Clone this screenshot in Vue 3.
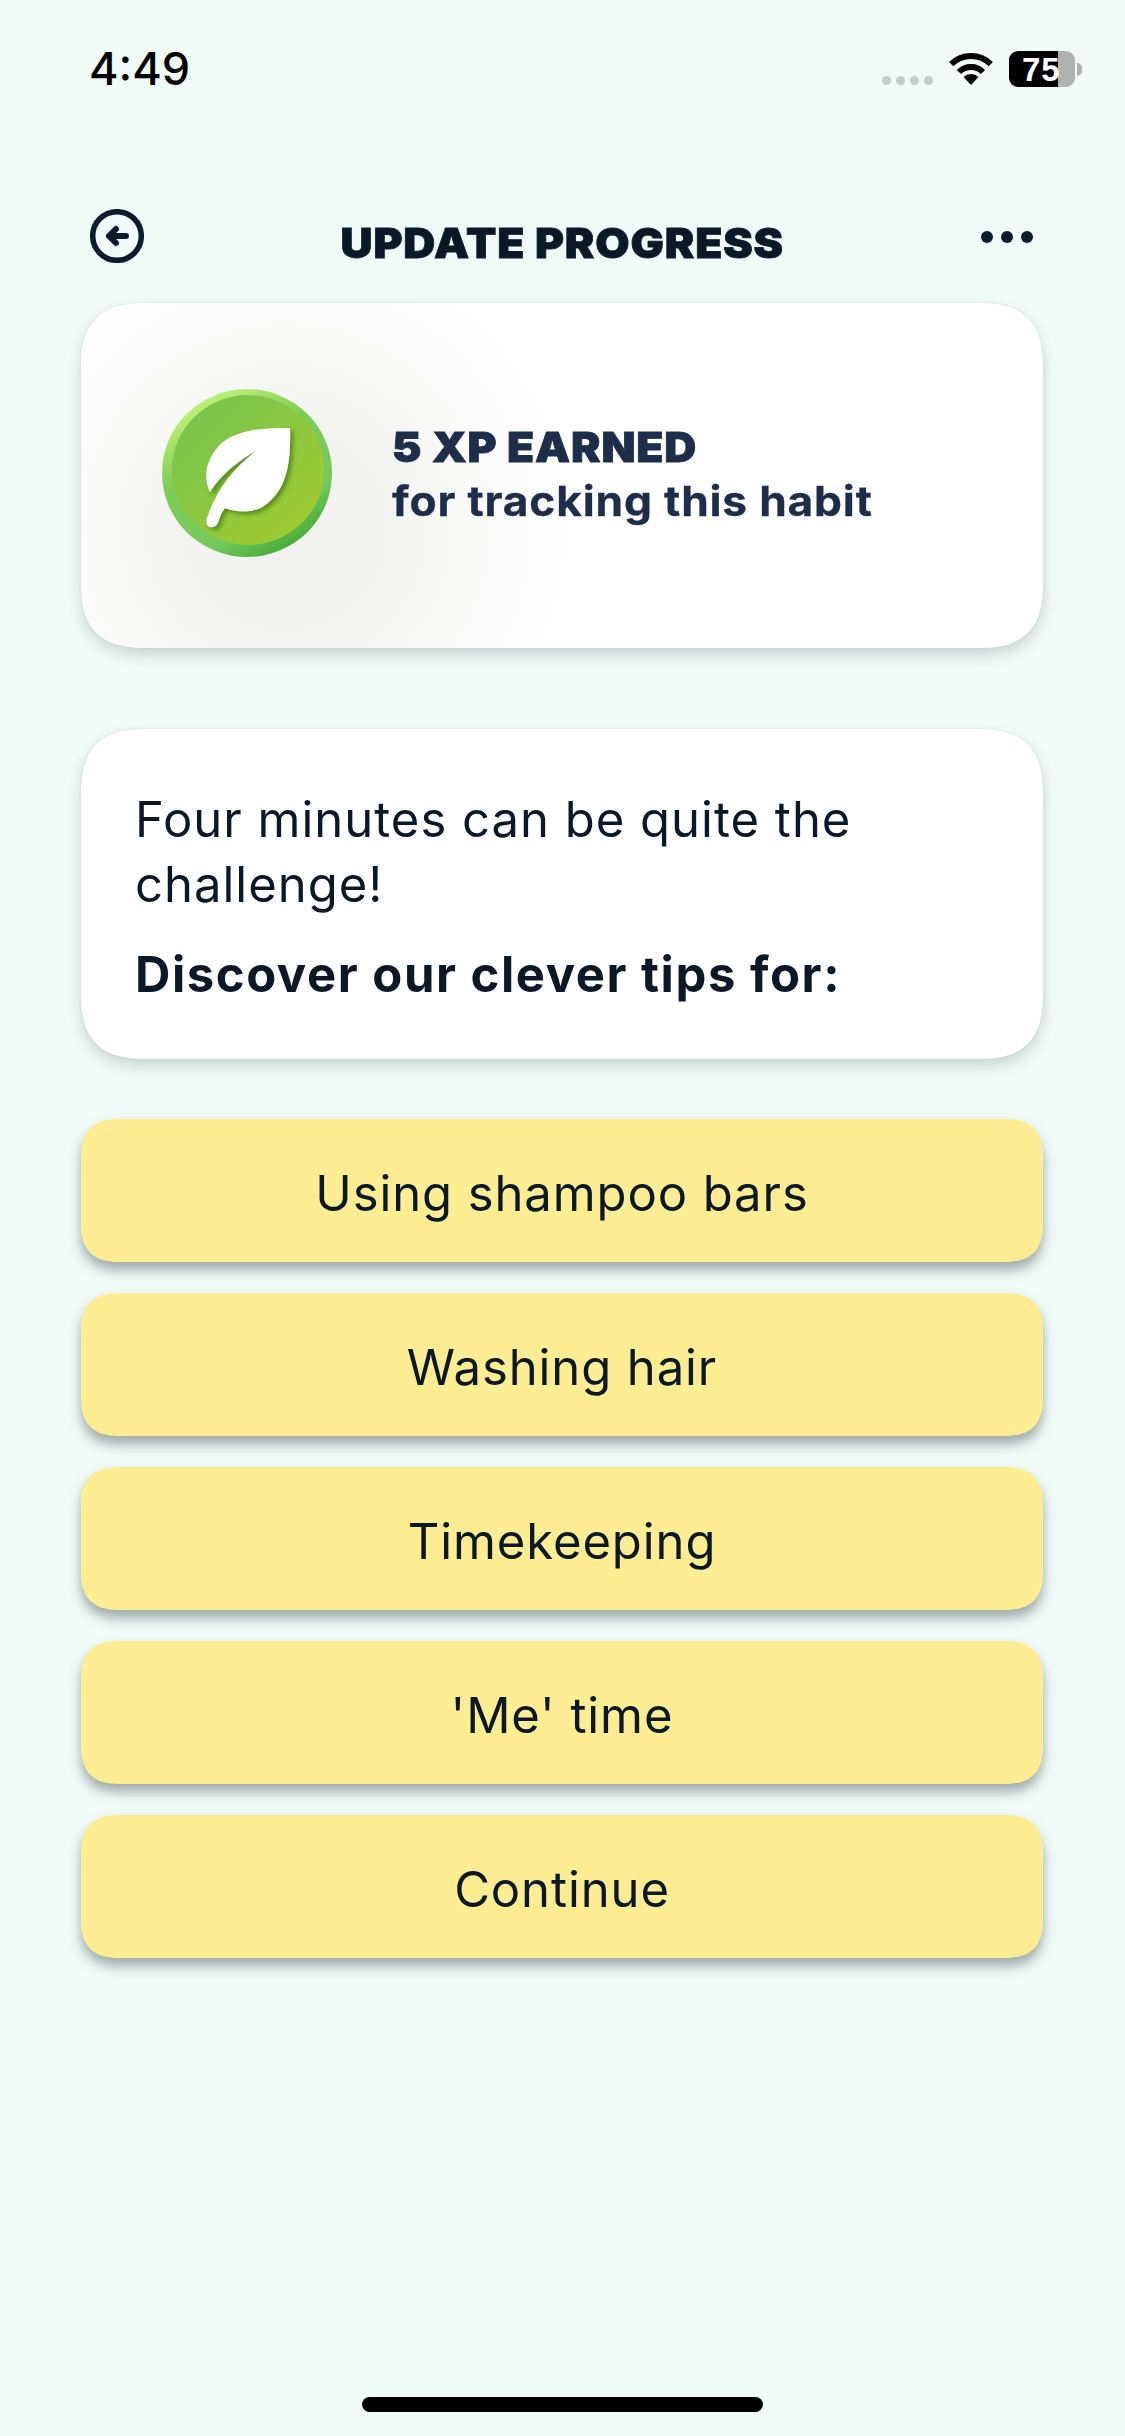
<script setup>
const options = ['Using shampoo bars', 'Washing hair', 'Timekeeping', "'Me' time", 'Continue']
</script>

<template>
  <div class="screen">
    <div class="status">
      <span class="time">4:49</span>
      <div class="status-right">
        <div class="signal"><i></i><i></i><i></i><i></i></div>
        <svg class="wifi" width="46" height="33" viewBox="0 0 46 33">
          <path d="M3.2 12.2A28 28 0 0 1 42.8 12.2M11 20A17 17 0 0 1 35 20" fill="none" stroke="#000" stroke-width="6" />
          <path d="M23 33L15.5 25A11 11 0 0 1 30.5 25Z" fill="#000" />
        </svg>
        <div class="battery"><span>75</span></div>
        <div class="nub"></div>
      </div>
    </div>

    <header class="head">
      <svg class="back" width="54" height="54" viewBox="0 0 54 54">
        <circle cx="27" cy="27" r="24.3" fill="none" stroke="#0d1b2e" stroke-width="5.5" />
        <path d="M36 27H19M26 20L19 27L26 34" fill="none" stroke="#0d1b2e" stroke-width="6" stroke-linecap="round" stroke-linejoin="round" />
      </svg>
      <h1 class="title">UPDATE PROGRESS</h1>
      <div class="more"><i></i><i></i><i></i></div>
    </header>

    <section class="card xp">
      <svg class="coin" width="170" height="170" viewBox="0 0 170 170">
        <defs>
          <linearGradient id="rim" x1="0.2" y1="0.05" x2="0.75" y2="1">
            <stop offset="0" stop-color="#c4f57c" />
            <stop offset="0.35" stop-color="#80cc55" />
            <stop offset="0.75" stop-color="#74c85e" />
            <stop offset="1" stop-color="#3fa52f" />
          </linearGradient>
          <linearGradient id="face" x1="0.1" y1="0.1" x2="0.85" y2="0.9">
            <stop offset="0" stop-color="#79c44f" />
            <stop offset="1" stop-color="#a0ca30" />
          </linearGradient>
          <filter id="leafShadow" x="-20%" y="-20%" width="140%" height="140%">
            <feDropShadow dx="3" dy="3" stdDeviation="2" flood-color="#3f7d12" flood-opacity="0.75" />
          </filter>
        </defs>
        <ellipse cx="85" cy="85" rx="85" ry="84" fill="url(#rim)" />
        <ellipse cx="86" cy="82" rx="76" ry="75" fill="url(#face)" />
        <path
          filter="url(#leafShadow)"
          fill="#fff"
          d="M128 40C95 39 68 44 55 60C44 73 41 90 48 104C60 85 78 72 94 63C72 80 55 100 45 130C43 137 47 140 51 139C55 138 56 135 57 132C58 128 60 124 63 120C76 125 93 126 106 115C125 99 129 75 128 40Z"
        />
      </svg>
      <div class="xp-text">
        <strong>5 XP EARNED</strong>
        <span>for tracking this habit</span>
      </div>
    </section>

    <section class="card message">
      <p>Four minutes can be quite the challenge!</p>
      <p class="bold">Discover our clever tips for:</p>
    </section>

    <div class="options">
      <button v-for="o in options" :key="o" class="option">{{ o }}</button>
    </div>

    <div class="home"></div>
  </div>
</template>

<style>
html, body { margin: 0; background: #f0faf7; }
</style>

<style scoped>
.screen {
  width: 1125px;
  height: 2436px;
  box-sizing: border-box;
  padding: 0 82px 0 81px;
  background: #f0faf7;
  color: #0b1828;
  font-family: Inter, "Liberation Sans", sans-serif;
  display: flex;
  flex-direction: column;
  overflow: hidden;
}
.status {
  height: 209px;
  margin: 0 -39px 0 8px;
  display: flex;
  justify-content: space-between;
  align-items: flex-start;
}
.time {
  margin-top: 42px;
  font-size: 45px;
  line-height: 54px;
  font-weight: 500;
  color: #000;
}
.status-right {
  margin-top: 51px;
  display: flex;
  align-items: flex-start;
}
.signal {
  display: flex;
  gap: 5px;
  margin: 25px 15px 0 0;
}
.signal i {
  width: 9px;
  height: 9px;
  border-radius: 50%;
  background: #c6cbc9;
}
.wifi { margin: 1px 15px 0 0; }
.battery {
  width: 66px;
  height: 36px;
  border-radius: 9px;
  background: linear-gradient(90deg, #000 75%, #aeb2b0 75%);
  color: #fff;
  font-size: 33px;
  line-height: 37px;
  font-weight: 700;
  font-family: "Liberation Sans", sans-serif;
  letter-spacing: 1px;
}
.battery span { display: block; padding-left: 13px; }
.nub {
  width: 5px;
  height: 13px;
  margin: 12px 0 0 2px;
  border-radius: 0 6px 6px 0;
  background: #aeb2b0;
}
.head {
  height: 94px;
  padding: 0 10px 0 9px;
  display: flex;
  justify-content: space-between;
  align-items: flex-start;
}
.title {
  margin: 14px 0 0;
  font-size: 41px;
  line-height: 40px;
  font-weight: 900;
  letter-spacing: 0.8px;
  transform: scaleX(1.08);
  -webkit-text-stroke: 0.8px #0d1b2e;
}
.more {
  display: flex;
  gap: 8px;
  margin-top: 22px;
}
.more i {
  width: 12px;
  height: 12px;
  border-radius: 50%;
  background: #0d1b2e;
}
.card {
  background: #fff;
  border-radius: 52px;
  box-shadow: 0 7px 14px rgba(60, 80, 80, 0.2), 0 0 2px rgba(60, 80, 80, 0.15);
}
.xp {
  height: 345px;
  box-sizing: border-box;
  padding: 0 0 0 81px;
  display: flex;
  align-items: center;
  gap: 60px;
  background: radial-gradient(circle 290px at 205px 225px, #f1f1ef 0%, #f3f3f1 35%, #f8f8f7 60%, #fcfcfc 80%, #fff 100%);
}
.coin { margin-top: -6px; }
.xp-text {
  display: flex;
  flex-direction: column;
  margin-top: -3px;
  color: #1d2d4a;
  font-size: 41px;
  line-height: 54px;
  letter-spacing: 0.75px;
  transform: scaleX(1.08);
  transform-origin: left center;
}
.xp-text strong { font-weight: 900; -webkit-text-stroke: 0.8px #1d2d4a; }
.xp-text span { font-weight: 700; -webkit-text-stroke: 0.3px #1d2d4a; }
.message {
  margin-top: 81px;
  height: 330px;
  box-sizing: border-box;
  padding: 58px 54px 0;
  font-size: 49px;
  line-height: 65px;
  letter-spacing: 1px;
}
.message p { margin: 0; }
.message .bold {
  margin-top: 25px;
  font-weight: 700;
  letter-spacing: 1.55px;
}
.options {
  margin-top: 60px;
  display: flex;
  flex-direction: column;
  gap: 31px;
}
.option {
  height: 143px;
  border: 0;
  border-radius: 32px;
  background: #feed92;
  color: #0b1828;
  font: inherit;
  font-size: 49px;
  letter-spacing: 0.9px;
  box-shadow: 0 8px 12px rgba(80, 95, 95, 0.5);
  padding: 5px 0 0;
}
@supports (corner-shape: squircle) {
  .card { border-radius: 66px; corner-shape: superellipse(1.4); }
  .option { border-radius: 40px; corner-shape: superellipse(1.4); }
}
.home {
  position: absolute;
  left: 362px;
  top: 2397px;
  width: 401px;
  height: 15px;
  border-radius: 8px;
  background: #000;
}
</style>
